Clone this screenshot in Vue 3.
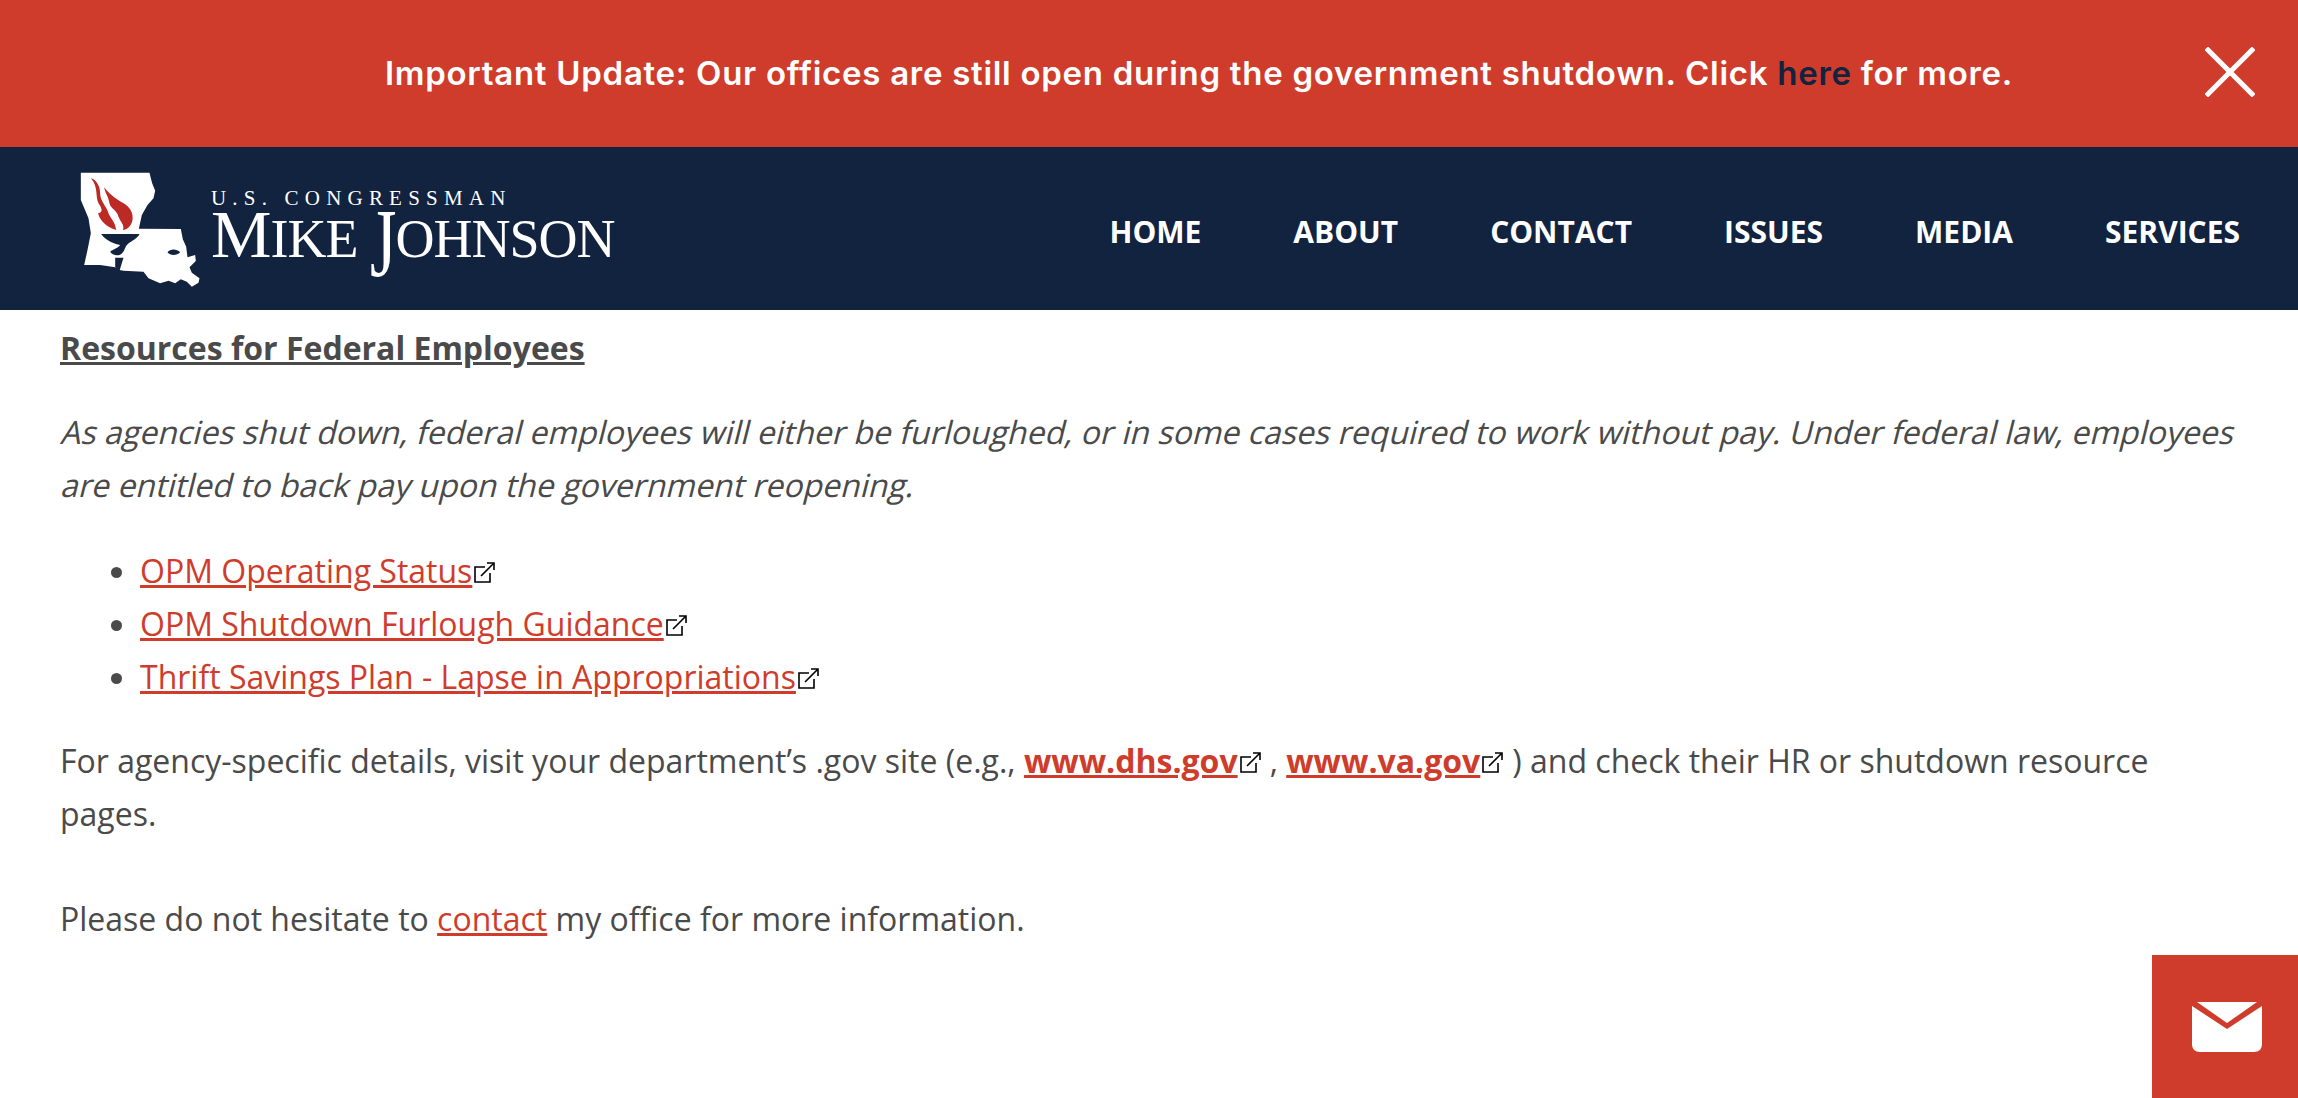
<template>
  <div class="page">
    <div class="banner">
      <p class="banner-text">Important Update: Our offices are still open during the government shutdown. Click <a class="banner-link">here</a> for more.</p>
      <svg class="banner-close" viewBox="0 0 50 50">
        <path d="M3 3 L47 47 M47 3 L3 47" stroke="#fff" stroke-width="5" fill="none" stroke-linecap="square"/>
      </svg>
    </div>

    <header class="header">
      <div class="logo">
        <svg class="logo-mark" viewBox="60 60 362 354">
          <path fill="#fff" d="M62 68 L268 68 L272 85 L276 100 L285 122 L280 145 L262 165 L245 195 L236 236 L362 237 L368 268 L378 290 L382 322 L405 315 L407 333 L388 352 L395 368 L418 385 L415 398 L395 410 L380 395 L362 388 L345 400 L325 392 L300 400 L265 385 L250 365 L190 362 L178 360 L165 352 L120 345 L72 345 L82 300 L92 250 L85 205 L62 150 Z"/>
          <path fill="#12233f" d="M322 307 C330 296 350 296 360 307 C350 318 330 318 322 307 Z"/>
          <path fill="#bc2a26" d="M92 85 C110 90 120 110 120 130 C120 155 140 170 145 190 C150 205 165 215 168 240 C140 232 118 212 114 190 C130 188 125 175 115 160 C105 140 115 110 92 85 Z"/>
          <path fill="#bc2a26" d="M132 112 C150 135 165 145 190 160 C210 172 220 190 217 210 C214 228 200 240 188 240 C195 225 180 215 175 200 C170 180 150 175 148 160 C145 140 135 130 132 112 Z"/>
          <path fill="#12233f" d="M123 252 L238 252 C232 266 215 272 203 282 C192 292 196 304 180 314 C168 318 155 314 150 305 C158 298 172 296 180 285 C165 282 140 275 123 252 Z"/>
          <path fill="#12233f" d="M165 323 L190 323 L178 362 L165 352 Z"/>
        </svg>
        <div class="logo-text">
          <div class="logo-small">U.S. CONGRESSMAN</div>
          <div class="logo-name"><span class="cap">M</span>IKE <span class="cap j">J</span>OHNSON</div>
        </div>
      </div>
      <nav class="nav">
        <a v-for="item in navItems" :key="item" class="nav-item">{{ item }}</a>
      </nav>
    </header>

    <main class="content">
      <p class="title">Resources for Federal Employees</p>
      <p class="intro">
        <span class="intro-line">As agencies shut down, federal employees will either be furloughed, or in some cases required to work without pay. Under federal law, employees</span>
        <span class="intro-line">are entitled to back pay upon the government reopening.</span>
      </p>
      <ul class="links">
        <li v-for="link in links" :key="link">
          <a class="link">{{ link }}</a><svg class="ext" viewBox="0 0 21 21"><path d="M11 5 H1 V20 H16 V11 M7 14 L19 2 M13 1 H20 V8" fill="none" stroke="#000" stroke-width="1.6"/></svg>
        </li>
      </ul>
      <p class="para">
        For agency-specific details, visit your department’s .gov site (e.g.,
        <a class="link strong">www.dhs.gov</a><svg class="ext" viewBox="0 0 21 21"><path d="M11 5 H1 V20 H16 V11 M7 14 L19 2 M13 1 H20 V8" fill="none" stroke="#000" stroke-width="1.6"/></svg>
        ,
        <a class="link strong">www.va.gov</a><svg class="ext" viewBox="0 0 21 21"><path d="M11 5 H1 V20 H16 V11 M7 14 L19 2 M13 1 H20 V8" fill="none" stroke="#000" stroke-width="1.6"/></svg>
        ) and check their HR or shutdown resource pages.
        <br><br>
        Please do not hesitate to <a class="link">contact</a> my office for more information.
      </p>
    </main>

    <div class="mail">
      <svg class="mail-icon" viewBox="0 0 70 50">
        <path fill="#fff" d="M5 0 H65 L35 21 Z"/>
        <path fill="#fff" d="M0 4 L35 27 L70 4 V42 C70 47 67 50 62 50 H8 C3 50 0 47 0 42 Z"/>
      </svg>
    </div>
  </div>
</template>

<script setup>
const navItems = ['HOME', 'ABOUT', 'CONTACT', 'ISSUES', 'MEDIA', 'SERVICES']
const links = [
  'OPM Operating Status',
  'OPM Shutdown Furlough Guidance',
  'Thrift Savings Plan - Lapse in Appropriations'
]
</script>

<style>
html, body {
  margin: 0;
  background: #fff;
}
</style>

<style scoped>
.page {
  position: relative;
  height: 1098px;
  overflow: hidden;
  font-family: "Open Sans", sans-serif;
  color: #4a4a4a;
  font-size: 32px;
  line-height: 52.8px;
}

.banner {
  position: relative;
  height: 147px;
  background: #cf3c2b;
  display: flex;
  align-items: center;
  justify-content: center;
}

.banner-text {
  margin: 0 0 0 100px;
  font-family: Inter, sans-serif;
  font-weight: 600;
  font-size: 33px;
  letter-spacing: 0.72px;
  white-space: nowrap;
  color: #fff;
}

.banner-link {
  color: #12233f;
}

.banner-close {
  position: absolute;
  left: 2205px;
  top: 47px;
  width: 50px;
  height: 50px;
}

.header {
  height: 163px;
  background: #12233f;
  display: flex;
  align-items: center;
  justify-content: space-between;
  padding: 0 58px 0 80px;
}

.logo {
  display: flex;
  align-items: center;
  gap: 10px;
}

.logo-mark {
  width: 121px;
  height: 118px;
}

.logo-text {
  font-family: "Liberation Serif", serif;
  color: #fff;
  white-space: nowrap;
  margin-top: -6px;
}

.logo-small {
  font-size: 21px;
  line-height: 22px;
  letter-spacing: 6.2px;
}

.logo-name {
  font-size: 54px;
  line-height: 50px;
  letter-spacing: -1px;
}

.cap {
  font-size: 68px;
}

.j {
  display: inline-block;
  transform: scaleY(1.42);
  transform-origin: 50% 3px;
}

.nav {
  display: flex;
  gap: 92px;
  padding-top: 7px;
}

.nav-item {
  font-weight: 700;
  font-size: 30px;
  line-height: 40px;
  color: #fff;
}

.content {
  padding: 12px 60px 0;
}

.content .title {
  margin: 0 0 31px;
  font-weight: 700;
  text-decoration: underline;
}

.content .intro {
  margin: 0 0 34px;
}

.content .para {
  margin: 0;
}

.intro-line {
  display: block;
  white-space: nowrap;
  transform: skewX(-14deg);
  transform-origin: 0 70%;
}

.links {
  margin: 0 0 31px;
  padding: 0 0 0 80px;
}

.link {
  color: #d03c2b;
  text-decoration: underline;
}

.strong {
  font-weight: 700;
}

.ext {
  width: 21px;
  height: 21px;
  margin: 0 0.7px 0 2px;
  vertical-align: 0;
}

.mail {
  position: absolute;
  right: 0;
  bottom: 0;
  width: 146px;
  height: 143px;
  box-sizing: border-box;
  padding-left: 4px;
  background: #cf3c2b;
  display: flex;
  align-items: center;
  justify-content: center;
}

.mail-icon {
  width: 70px;
  height: 50px;
}
</style>
